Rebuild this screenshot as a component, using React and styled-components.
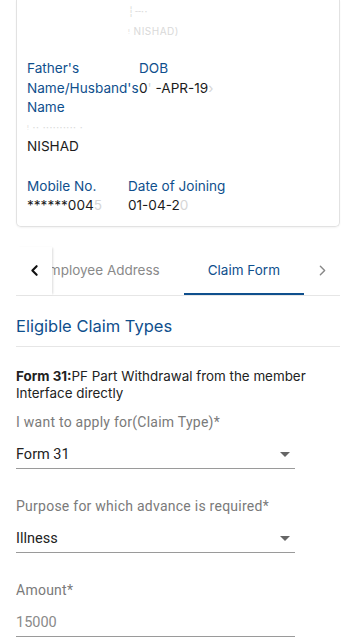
import styled, { createGlobalStyle } from "styled-components";
import { ChevronLeft, ChevronRight } from "lucide-react";

const Global = createGlobalStyle`
  body {
    margin: 0;
    background: #fff;
    font-family: Inter, "Noto Sans", sans-serif;
    color: #222;
  }
`;

const BLUE = "#0f4f8d";

function App() {
  return (
    <>
      <Global />
      <Page>
        <Card>
          <InfoRow $first="101px">
            <Cell />
            <Cell>
              <Blur>┆╌··</Blur>
              <Blur>ᵎ NISHAD)</Blur>
            </Cell>
          </InfoRow>
          <InfoRow $first="112px" $gap="18px">
            <Cell>
              <Label>
                Father's <NoWrap>Name/Husband's</NoWrap> Name
              </Label>
              <Blur>ᵎ ·· ·········· ·</Blur>
              <Value>NISHAD</Value>
            </Cell>
            <Cell>
              <Label>DOB</Label>
              <Value>
                0<Fade>'</Fade> -APR-19<Fade>›</Fade>
              </Value>
            </Cell>
          </InfoRow>
          <InfoRow $first="101px" $gap="20px">
            <Cell>
              <Label>Mobile No.</Label>
              <Value>
                ******004<Fade>5</Fade>
              </Value>
            </Cell>
            <Cell>
              <Label>Date of Joining</Label>
              <Value>
                01-04-2<Fade>0</Fade>
              </Value>
            </Cell>
          </InfoRow>
        </Card>

        <TabBar>
          <ScrollBtn $shadow>
            <ChevronLeft size={17} strokeWidth={3} color="#111" />
          </ScrollBtn>
          <TabViewport>
            <Tab>Employee Address</Tab>
            <Tab $active>Claim Form</Tab>
          </TabViewport>
          <ScrollBtn>
            <ChevronRight size={17} strokeWidth={2} color="#888" />
          </ScrollBtn>
        </TabBar>

        <SectionTitle>Eligible Claim Types</SectionTitle>
        <Divider />

        <Description>
          <b>Form 31:</b>PF Part Withdrawal from the member Interface directly
        </Description>

        <Field $top="9px">
          <FieldLabel>I want to apply for(Claim Type)*</FieldLabel>
          <Control>
            <span>Form 31</span>
            <Caret />
          </Control>
        </Field>
        <Field $top="27px">
          <FieldLabel>Purpose for which advance is required*</FieldLabel>
          <Control>
            <span>Illness</span>
            <Caret />
          </Control>
        </Field>
        <Field $top="27px">
          <FieldLabel>Amount*</FieldLabel>
          <Control $muted>
            <span>15000</span>
          </Control>
        </Field>
      </Page>
    </>
  );
}

const Page = styled.div`
  padding: 0 16px 40px;
`;

const Card = styled.div`
  border: 1px solid #e2e2e2;
  border-top: none;
  border-radius: 0 0 5px 5px;
  padding: 2px 10px 10px;
  box-shadow: 0 1px 2px rgba(0, 0, 0, 0.05);
`;

const InfoRow = styled.div`
  display: grid;
  grid-template-columns: ${(p) => p.$first} 1fr;
  margin-top: ${(p) => p.$gap || "0"};
  font-size: 13.6px;
  line-height: 19.5px;
`;

const Cell = styled.div`
  display: flex;
  flex-direction: column;
  min-width: 0;
`;

const Label = styled.div`
  color: ${BLUE};
`;

const NoWrap = styled.span`
  white-space: nowrap;
`;

const Value = styled.div`
  color: #1c1c1c;
  white-space: nowrap;
`;

const Fade = styled.span`
  color: #d6d6d6;
`;

const Blur = styled.div`
  color: #d9d9d9;
  font-size: 10px;
  letter-spacing: 0.5px;
  white-space: nowrap;
`;

const TabBar = styled.div`
  display: flex;
  height: 48px;
  margin-top: 20px;
  border-bottom: 1px solid #e6e6e6;
`;

const ScrollBtn = styled.div`
  width: 36px;
  flex-shrink: 0;
  display: flex;
  align-items: center;
  justify-content: center;
  position: relative;
  z-index: 1;
  background: #fff;
  box-shadow: ${(p) => (p.$shadow ? "2px 0 2px -1px rgba(0,0,0,0.14)" : "none")};
`;

const TabViewport = styled.div`
  flex: 1;
  display: flex;
  justify-content: flex-end;
  overflow: hidden;
`;

const Tab = styled.div`
  flex-shrink: 0;
  display: flex;
  align-items: center;
  padding: 0 24px;
  font-size: 13.5px;
  white-space: nowrap;
  color: ${(p) => (p.$active ? BLUE : "#8a8a8a")};
  border-bottom: 2px solid ${(p) => (p.$active ? BLUE : "transparent")};
  box-sizing: border-box;
`;

const SectionTitle = styled.div`
  margin-top: 19px;
  font-size: 16.5px;
  line-height: 22px;
  color: ${BLUE};
`;

const Divider = styled.div`
  height: 1px;
  background: #e6e6e6;
  margin-top: 9px;
`;

const Description = styled.div`
  margin-top: 21px;
  font-size: 13.4px;
  line-height: 17.5px;
  color: #222;
  padding-right: 20px;
  b {
    font-weight: 700;
  }
`;

const Field = styled.div`
  margin-top: ${(p) => p.$top};
  width: 279px;
  font-family: Roboto, "Liberation Sans", sans-serif;
`;

const FieldLabel = styled.div`
  font-size: 14px;
  letter-spacing: 0.25px;
  line-height: 20px;
  color: #7a7a7a;
  white-space: nowrap;
`;

const Control = styled.div`
  margin-top: 10px;
  height: 26px;
  display: flex;
  align-items: center;
  justify-content: space-between;
  font-size: 14.5px;
  color: ${(p) => (p.$muted ? "#8a8a8a" : "#222")};
  border-bottom: 1px solid #9a9a9a;
`;

const Caret = styled.span`
  width: 0;
  height: 0;
  margin-right: 5px;
  border-left: 5px solid transparent;
  border-right: 5px solid transparent;
  border-top: 5px solid #666;
`;

export default App;
